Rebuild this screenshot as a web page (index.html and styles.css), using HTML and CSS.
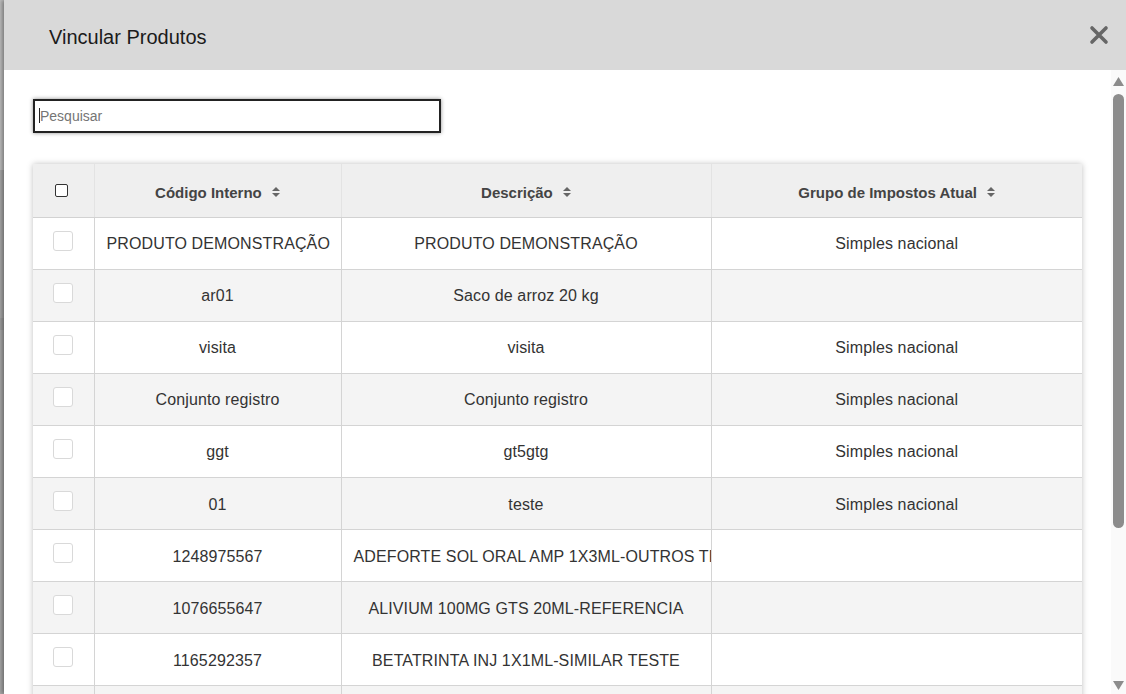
FILE: index.html
```html
<!DOCTYPE html>
<html lang="pt-BR">
<head>
  <meta charset="UTF-8">
  <meta name="viewport" content="width=device-width, initial-scale=1.0">
  <title>Vincular Produtos</title>
  <link rel="stylesheet" href="styles.css">
</head>
<body>
  <div class="page-strip"></div>

  <div class="modal">
    <div class="modal-header">
      <h2>Vincular Produtos</h2>
      <button class="close" type="button" aria-label="Fechar">
        <svg width="20" height="20" viewBox="0 0 20 20">
          <path d="M3 3 L17 17 M17 3 L3 17" stroke="#666" stroke-width="3.6" stroke-linecap="round" fill="none"/>
        </svg>
      </button>
    </div>

    <div class="modal-body">
      <div class="content">
        <div class="search">
          <input type="text" placeholder="Pesquisar">
        </div>

        <table class="products">
          <colgroup>
            <col style="width: 61px">
            <col style="width: 247px">
            <col style="width: 370px">
            <col>
          </colgroup>
          <thead>
            <tr>
              <th class="check"><input type="checkbox"></th>
              <th>Código Interno <svg class="sort" width="8" height="10" viewBox="0 0 8 10"><path d="M0 4 L4 0 L8 4 Z M0 6 L8 6 L4 10 Z" fill="#666"/></svg></th>
              <th>Descrição <svg class="sort" width="8" height="10" viewBox="0 0 8 10"><path d="M0 4 L4 0 L8 4 Z M0 6 L8 6 L4 10 Z" fill="#666"/></svg></th>
              <th>Grupo de Impostos Atual <svg class="sort" width="8" height="10" viewBox="0 0 8 10"><path d="M0 4 L4 0 L8 4 Z M0 6 L8 6 L4 10 Z" fill="#666"/></svg></th>
            </tr>
          </thead>
          <tbody>
            <tr>
              <td class="check"><span class="box"></span></td>
              <td>PRODUTO DEMONSTRAÇÃO</td>
              <td>PRODUTO DEMONSTRAÇÃO</td>
              <td>Simples nacional</td>
            </tr>
            <tr>
              <td class="check"><span class="box"></span></td>
              <td>ar01</td>
              <td>Saco de arroz 20 kg</td>
              <td></td>
            </tr>
            <tr>
              <td class="check"><span class="box"></span></td>
              <td>visita</td>
              <td>visita</td>
              <td>Simples nacional</td>
            </tr>
            <tr>
              <td class="check"><span class="box"></span></td>
              <td>Conjunto registro</td>
              <td>Conjunto registro</td>
              <td>Simples nacional</td>
            </tr>
            <tr>
              <td class="check"><span class="box"></span></td>
              <td>ggt</td>
              <td>gt5gtg</td>
              <td>Simples nacional</td>
            </tr>
            <tr>
              <td class="check"><span class="box"></span></td>
              <td>01</td>
              <td>teste</td>
              <td>Simples nacional</td>
            </tr>
            <tr>
              <td class="check"><span class="box"></span></td>
              <td>1248975567</td>
              <td class="left">ADEFORTE SOL ORAL AMP 1X3ML-OUTROS TESTE</td>
              <td></td>
            </tr>
            <tr>
              <td class="check"><span class="box"></span></td>
              <td>1076655647</td>
              <td>ALIVIUM 100MG GTS 20ML-REFERENCIA</td>
              <td></td>
            </tr>
            <tr>
              <td class="check"><span class="box"></span></td>
              <td>1165292357</td>
              <td>BETATRINTA INJ 1X1ML-SIMILAR TESTE</td>
              <td></td>
            </tr>
            <tr>
              <td class="check"><span class="box"></span></td>
              <td>1098244510</td>
              <td>BUSCOPAN COMPOSTO 20CPR</td>
              <td></td>
            </tr>
          </tbody>
        </table>
      </div>

      <div class="scrollbar">
        <svg width="11" height="9" viewBox="0 0 11 9"><path d="M0 9 L5.5 0 L11 9 Z" fill="#8c8c8c"/></svg>
        <div class="thumb"></div>
        <div class="track-rest"></div>
        <svg width="11" height="9" viewBox="0 0 11 9"><path d="M0 0 L11 0 L5.5 9 Z" fill="#8c8c8c"/></svg>
      </div>
    </div>
  </div>
</body>
</html>
```

FILE: styles.css
```css
html, body {
  height: 100%;
}
body {
  margin: 0;
  display: flex;
  overflow: hidden;
  font-family: "Liberation Sans", Arial, sans-serif;
  background-color: #a9a9a9;
}
.page-strip {
  width: 4px;
  flex-shrink: 0;
  background: linear-gradient(to bottom, #bdbdbd 0, #bdbdbd 170px, #a7a7a7 170px, #a7a7a7 318px, #9d9d9d 318px, #9d9d9d 330px, #a7a7a7 330px);
}
.modal {
  flex: 1;
  display: flex;
  flex-direction: column;
  min-width: 0;
  background: white;
  box-shadow: -2px 0 4px rgba(0,0,0,0.35);
}
.modal-header {
  height: 70px;
  flex-shrink: 0;
  display: flex;
  align-items: center;
  justify-content: space-between;
  padding: 0 17px 0 45px;
  background-color: #d9d9d9;
}
.modal-header h2 {
  margin: 0;
  padding-top: 5px;
  font-size: 20px;
  font-weight: normal;
  color: #1b1b1b;
}
.close {
  border: none;
  background: none;
  padding: 0;
  width: 20px;
  height: 20px;
  cursor: pointer;
}
.close svg {
  display: block;
}
.modal-body {
  flex: 1;
  min-height: 0;
  display: flex;
}
.content {
  flex: 1;
  min-width: 0;
  padding: 29px 29px 0;
  overflow: hidden;
}
.search {
  position: relative;
  width: 408px;
}
.search::after {
  content: "";
  position: absolute;
  left: 6px;
  top: 9px;
  width: 1px;
  height: 15px;
  background: #222;
}
.search input {
  display: block;
  box-sizing: border-box;
  width: 408px;
  height: 34px;
  padding: 0 5px;
  border: 2px solid #222;
  box-shadow: 0 0 4px rgba(0,0,0,0.45);
  outline: none;
  font-family: inherit;
  font-size: 14px;
  color: #333;
}
.search input::placeholder {
  color: #757575;
}
.products {
  width: 100%;
  margin-top: 31px;
  border-collapse: collapse;
  table-layout: fixed;
  background: white;
  box-shadow: 0 0 6px rgba(0,0,0,0.25);
}
.products th {
  height: 53px;
  box-sizing: border-box;
  padding: 4px 12px 0;
  background-color: #efefef;
  border-left: 1px solid #e3e3e3;
  border-bottom: 1px solid #d2d2d2;
  font-size: 15px;
  font-weight: bold;
  color: #444;
  white-space: nowrap;
}
.products th:first-child,
.products td:first-child {
  border-left: none;
}
.products th.check {
  padding: 0;
}
.products th.check input {
  -webkit-appearance: none;
  appearance: none;
  display: block;
  width: 13px;
  height: 13px;
  margin: 0 auto 0 22px;
  border: 1px solid #333;
  border-radius: 2px;
  background: white;
}
.sort {
  margin-left: 6px;
  vertical-align: 1px;
}
.products td {
  height: 52.1px;
  box-sizing: border-box;
  padding: 2px 12px 0;
  border-left: 1px solid #d4d4d4;
  border-bottom: 1px solid #d4d4d4;
  font-size: 16px;
  letter-spacing: 0.12px;
  color: #333;
  text-align: center;
  white-space: nowrap;
  overflow: hidden;
}
.products td.left {
  text-align: left;
}
.products td.check {
  vertical-align: top;
  padding: 13px 0 0;
}
.box {
  display: block;
  box-sizing: border-box;
  width: 20px;
  height: 20px;
  margin: 0 auto;
  border: 1px solid #d9d9d9;
  border-radius: 3px;
  background: white;
}
.products tbody tr:nth-child(even) {
  background-color: #f4f4f4;
}
.scrollbar {
  width: 15px;
  flex-shrink: 0;
  display: flex;
  flex-direction: column;
  align-items: center;
  padding: 7px 0 4px;
  box-sizing: border-box;
  background-color: #fafafa;
}
.scrollbar svg {
  display: block;
}
.thumb {
  width: 11px;
  height: 434px;
  margin-top: 8px;
  border-radius: 6px;
  background-color: #8c8c8c;
}
.track-rest {
  flex: 1;
}
```
